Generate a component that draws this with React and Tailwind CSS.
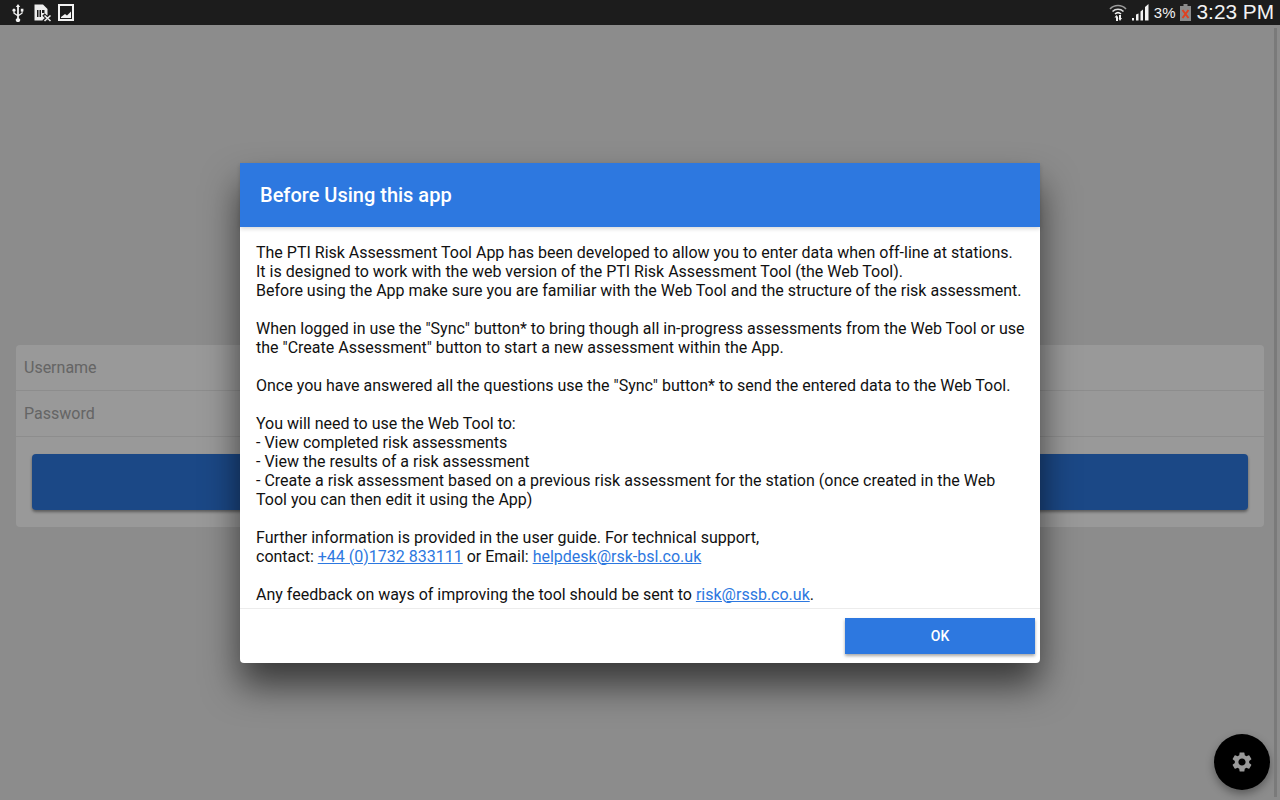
import { MdSettings } from "react-icons/md";

function UsbIcon() {
    return (
        <svg width="12" height="18" viewBox="0 0 12 18" fill="#f2f2f2">
            <path d="M6 0 L8.2 3 H6.9 V10.6 L9.6 8.8 V7.4 H8.8 V4.8 H11.4 V7.4 H10.6 V9.4 L6.9 12 V14.2 A2.1 2.1 0 1 1 5.1 14.2 V12 L1.4 9.4 V7.6 A1.5 1.5 0 1 1 2.6 7.6 V8.8 L5.1 10.6 V3 H3.8 Z" />
        </svg>
    );
}

function SimIcon() {
    return (
        <svg width="18" height="18" viewBox="0 0 18 18">
            <path d="M0.5 0.5 H9 L13.5 5 V16.5 H0.5 Z" fill="#eeeeee" />
            <path d="M3 6 H4.5 V13 H3 Z M5.5 6 H7 V13 H5.5 Z M8 6 H10.5 V9 H8 Z" fill="#1c1c1c" />
            <path d="M9.5 10.5 L17 17.5 M17 10.5 L9.5 17.5" stroke="#1c1c1c" strokeWidth="3.5" />
            <path d="M10.5 11.5 L16.5 17 M16.5 11.5 L10.5 17" stroke="#eeeeee" strokeWidth="1.6" />
        </svg>
    );
}

function PictureIcon() {
    return (
        <svg width="16" height="17" viewBox="0 0 16 17">
            <rect x="1" y="1" width="14" height="15" fill="none" stroke="#f2f2f2" strokeWidth="2" />
            <path d="M3 13 L7 10 L9 11.5 L13 7.5 V14 H3 Z" fill="#f2f2f2" />
        </svg>
    );
}

function WifiIcon() {
    return (
        <svg width="18" height="20" viewBox="0 0 18 20" fill="none">
            <path d="M1 7 A11 11 0 0 1 17 7" stroke="#9a9a9a" strokeWidth="1.6" />
            <path d="M3.5 9.5 A8 8 0 0 1 14.5 9.5" stroke="#d8d8d8" strokeWidth="1.6" />
            <path d="M6 12 A4.5 4.5 0 0 1 12 12" stroke="#f2f2f2" strokeWidth="1.6" />
            <path d="M7 19 V15.5 H5.5 L7.5 13 L9 15 V19 Z M10 13 H12 V16 H13 L11 19 L9.5 16.5 H10 Z" fill="#f2f2f2" />
        </svg>
    );
}

function SignalIcon() {
    return (
        <svg width="17" height="17" viewBox="0 0 17 17" fill="#f2f2f2">
            <rect x="0" y="14" width="2" height="2.5" />
            <path d="M4 10.5 L6.5 9.5 V16.5 H4 Z" />
            <path d="M8.5 7.5 L11 5.5 V16.5 H8.5 Z" />
            <path d="M13 3 L16.5 0 V16.5 H13 Z" />
        </svg>
    );
}

function BatteryIcon() {
    return (
        <svg width="11" height="17" viewBox="0 0 11 17">
            <path d="M3.5 0 H7.5 V2 H11 V17 H0 V2 H3.5 Z" fill="#8a8a8a" />
            <path d="M2.5 6 L8.5 14 M8.5 6 L2.5 14" stroke="#e0401f" strokeWidth="2" />
        </svg>
    );
}

function StatusBar() {
    return (
        <div className="h-[25px] shrink-0 bg-[#1c1c1c] flex items-center justify-between pl-[12px] pr-[6px]">
            <div className="flex items-center">
                <UsbIcon />
                <span className="ml-[10px]"><SimIcon /></span>
                <span className="ml-[6px]"><PictureIcon /></span>
            </div>
            <div className="flex items-center text-[#f2f2f2] font-['Liberation_Sans',sans-serif]">
                <WifiIcon />
                <span className="ml-[5px]"><SignalIcon /></span>
                <span className="ml-[5px] text-[15px] leading-none pt-px">3%</span>
                <span className="ml-[4px]"><BatteryIcon /></span>
                <span className="ml-[6px] text-[20.8px] leading-none">3:23 PM</span>
            </div>
        </div>
    );
}

function LoginForm() {
    return (
        <div className="pt-[320px] px-4">
            <div className="bg-white rounded-sm">
                <div className="h-[45px] px-2 flex items-center text-[16px] text-[#a8a8a8]">Username</div>
                <div className="border-t border-[#ececec] h-[46px] px-2 flex items-center text-[16px] text-[#a8a8a8]">Password</div>
                <div className="border-t border-[#ececec] h-[91px] px-4 pt-[17px]">
                    <div className="h-[56px] bg-[#2d78e0] rounded-sm shadow-[0_2px_3px_rgba(0,0,0,0.4)]" />
                </div>
            </div>
        </div>
    );
}

function Dialog() {
    return (
        <div className="w-[800px] h-[500px] bg-white rounded-sm flex flex-col shadow-[0_22px_36px_rgba(0,0,0,0.6)]">
            <div className="h-[64px] shrink-0 bg-[#2d78e0] px-5 flex items-center text-white text-[20px] font-medium shadow-[0_2px_4px_rgba(0,0,0,0.15)]">
                Before Using this app
            </div>
            <div className="flex-1 overflow-hidden pt-[16px] pl-4 pr-3 text-[16px] leading-[19px] text-[#111111]">
                <p>The PTI Risk Assessment Tool App has been developed to allow you to enter data when off-line at stations.</p>
                <p>It is designed to work with the web version of the PTI Risk Assessment Tool (the Web Tool).</p>
                <p className="mb-[19px]">Before using the App make sure you are familiar with the Web Tool and the structure of the risk assessment.</p>
                <p className="mb-[19px]">When logged in use the "Sync" button* to bring though all in-progress assessments from the Web Tool or use the "Create Assessment" button to start a new assessment within the App.</p>
                <p className="mb-[19px]">Once you have answered all the questions use the "Sync" button* to send the entered data to the Web Tool.</p>
                <p>You will need to use the Web Tool to:</p>
                <p>- View completed risk assessments</p>
                <p>- View the results of a risk assessment</p>
                <p className="mb-[19px]">- Create a risk assessment based on a previous risk assessment for the station (once created in the Web Tool you can then edit it using the App)</p>
                <p>Further information is provided in the user guide. For technical support,</p>
                <p className="mb-[19px]">
                    contact: <a href="#" className="text-[#2d78e0] underline">+44 (0)1732 833111</a> or Email: <a href="#" className="text-[#2d78e0] underline">helpdesk@rsk-bsl.co.uk</a>
                </p>
                <p>
                    Any feedback on ways of improving the tool should be sent to <a href="#" className="text-[#2d78e0] underline">risk@rssb.co.uk</a>.
                </p>
            </div>
            <div className="h-[55px] shrink-0 border-t border-[#ececec] flex justify-end items-start pt-[9px] pr-[5px]">
                <button className="w-[190px] h-[36px] pt-[2px] bg-[#2d78e0] text-white text-[14px] font-medium shadow-[0_2px_3px_rgba(0,0,0,0.35)]">OK</button>
            </div>
        </div>
    );
}

export default function App() {
    return (
        <div className="relative h-screen overflow-hidden flex flex-col bg-[#e9e9e9] font-['Roboto',sans-serif]">
            <StatusBar />
            <div className="relative flex-1">
                <LoginForm />
                <div className="absolute right-[10px] bottom-[10px] w-[56px] h-[56px] rounded-full bg-black flex items-center justify-center shadow-[0_4px_8px_rgba(0,0,0,0.35)]">
                    <MdSettings size={24} color="#ffffff" />
                </div>
                <div className="absolute inset-0 bg-black/40 flex items-center justify-center">
                    <Dialog />
                </div>
                <div className="absolute right-[3px] top-[3px] bottom-[3px] w-[3px] bg-[#7a7a7a]" />
            </div>
        </div>
    );
}
